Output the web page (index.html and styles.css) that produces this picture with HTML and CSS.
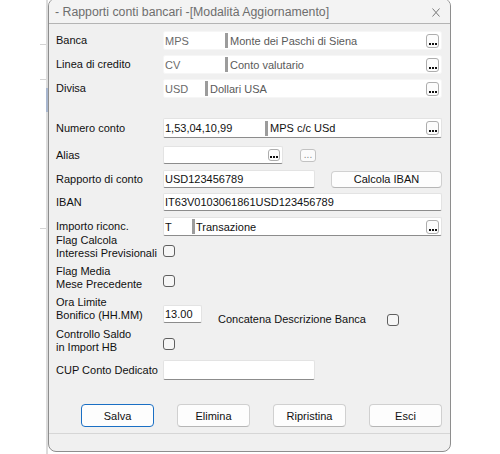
FILE: index.html
```html
<!DOCTYPE html>
<html>
<head>
<meta charset="utf-8">
<link rel="stylesheet" href="styles.css">
</head>
<body>
<div class="edge">
  <div class="edge-ticks">
    <span class="tick t1"></span><span class="tick t2"></span><span class="tick t3"></span>
  </div>
  <div class="edge-line"><span class="edge-blue"></span></div>
</div>
<div class="win">
  <div class="titlebar">
    <span class="title">- Rapporti conti bancari -[Modalità Aggiornamento]</span>
    <svg class="close" width="8" height="9" viewBox="0 0 8 9"><path d="M0.5 0.5L7.5 8.5M7.5 0.5L0.5 8.5" stroke="#7a7a7a" stroke-width="1" fill="none"/></svg>
  </div>
  <div class="content">
    <div class="row r1">
      <div class="lbl">Banca</div>
      <div class="fld dis w-full"><span class="code cw61">MPS</span><span class="bar"></span><span class="desc">Monte dei Paschi di Siena</span><span class="ell"><svg width="8" height="2" viewBox="0 0 8 2"><rect x="0" y="0" width="2" height="2"/><rect x="3" y="0" width="2" height="2"/><rect x="6" y="0" width="2" height="2"/></svg></span></div>
    </div>
    <div class="row r2">
      <div class="lbl">Linea di credito</div>
      <div class="fld dis w-full"><span class="code cw61">CV</span><span class="bar"></span><span class="desc">Conto valutario</span><span class="ell"><svg width="8" height="2" viewBox="0 0 8 2"><rect x="0" y="0" width="2" height="2"/><rect x="3" y="0" width="2" height="2"/><rect x="6" y="0" width="2" height="2"/></svg></span></div>
    </div>
    <div class="row r3">
      <div class="lbl">Divisa</div>
      <div class="fld dis w-full"><span class="code cw41">USD</span><span class="bar"></span><span class="desc">Dollari USA</span><span class="ell"><svg width="8" height="2" viewBox="0 0 8 2"><rect x="0" y="0" width="2" height="2"/><rect x="3" y="0" width="2" height="2"/><rect x="6" y="0" width="2" height="2"/></svg></span></div>
    </div>
    <div class="row r4">
      <div class="lbl">Numero conto</div>
      <div class="fld w-full"><span class="code cw101">1,53,04,10,99</span><span class="bar"></span><span class="desc">MPS c/c USd</span><span class="ell"><svg width="8" height="2" viewBox="0 0 8 2"><rect x="0" y="0" width="2" height="2"/><rect x="3" y="0" width="2" height="2"/><rect x="6" y="0" width="2" height="2"/></svg></span></div>
    </div>
    <div class="row r5">
      <div class="lbl">Alias</div>
      <div class="fld w-alias"><span class="ell small"><svg width="8" height="2" viewBox="0 0 8 2"><rect x="0" y="0" width="2" height="2"/><rect x="3" y="0" width="2" height="2"/><rect x="6" y="0" width="2" height="2"/></svg></span></div>
      <span class="ell2">...</span>
    </div>
    <div class="row r6">
      <div class="lbl">Rapporto di conto</div>
      <div class="fld w-mid"><span class="code">USD123456789</span></div>
      <div class="btn calc">Calcola IBAN</div>
    </div>
    <div class="row r7">
      <div class="lbl">IBAN</div>
      <div class="fld w-full"><span class="code">IT63V0103061861USD123456789</span></div>
    </div>
    <div class="row r8">
      <div class="lbl">Importo riconc.</div>
      <div class="fld w-full"><span class="code cw28">T</span><span class="bar"></span><span class="desc d1">Transazione</span><span class="ell"><svg width="8" height="2" viewBox="0 0 8 2"><rect x="0" y="0" width="2" height="2"/><rect x="3" y="0" width="2" height="2"/><rect x="6" y="0" width="2" height="2"/></svg></span></div>
    </div>
    <div class="row r9 rchk">
      <div class="lbl lbl2">Flag Calcola<br>Interessi Previsionali</div>
      <span class="chk mb1"></span>
    </div>
    <div class="row r10 rchk">
      <div class="lbl lbl2">Flag Media<br>Mese Precedente</div>
      <span class="chk mb2"></span>
    </div>
    <div class="row r11 rchk">
      <div class="lbl lbl3">Ora Limite<br>Bonifico (HH.MM)</div>
      <div class="fld w-ora"><span class="code">13.00</span></div>
      <span class="concat">Concatena Descrizione Banca</span>
      <span class="chk"></span>
    </div>
    <div class="row r12 rchk">
      <div class="lbl lbl3">Controllo Saldo<br>in Import HB</div>
      <span class="chk mb4"></span>
    </div>
    <div class="row r13">
      <div class="lbl">CUP Conto Dedicato</div>
      <div class="fld w-mid"></div>
    </div>
    <div class="buttons">
      <div class="btn bt def">Salva</div>
      <div class="btn bt">Elimina</div>
      <div class="btn bt">Ripristina</div>
      <div class="btn bt">Esci</div>
    </div>
    <div class="sep"></div>
    <div class="status"></div>
  </div>
</div>
</body>
</html>
```
FILE: styles.css
```css
* { box-sizing: border-box; }
html, body { margin: 0; padding: 0; background: #fff; }
body {
  font-family: "Liberation Sans", Arial, sans-serif;
  font-size: 11px;
  color: #111;
  display: flex;
  width: 500px;
  height: 454px;
  overflow: hidden;
}
.edge { width: 48px; flex: none; display: flex; justify-content: flex-end; }
.edge-ticks { width: 6px; display: flex; flex-direction: column; }
.tick { display: block; height: 1px; background: #d4d4d4; }
.t1 { margin-top: 44px; }
.t2 { margin-top: 34px; }
.t3 { margin-top: 148px; }
.edge-line { width: 2px; height: 100%; background: #dcdcdc; display: flex; flex-direction: column; }
.edge-blue { display: block; margin-top: 88px; height: 24px; background: #a9b7cf; }

.win {
  flex: none;
  width: 403px;
  height: 454px;
  margin-top: -2px;
  border: 1px solid #8e8e8e;
  border-radius: 8px;
  background: #f0f0f0;
  display: flex;
  flex-direction: column;
  overflow: hidden;
}
.titlebar {
  height: 25px;
  flex: none;
  display: flex;
  align-items: center;
  padding: 2px 10px 0 6px;
  background: #f3f3f3;
  border-bottom: 1px solid #b4b4b4;
}
.title { font-size: 12.3px; color: #6e6e6e; white-space: nowrap; }
.close { margin-left: auto; }

.content { flex: 1; display: flex; flex-direction: column; }
.row { display: flex; align-items: center; padding-left: 7px; flex: none; }
.lbl { width: 107px; flex: none; line-height: 13px; white-space: nowrap; }
.rchk { align-items: flex-end; }
.lbl2 { line-height: 12.5px; align-self: flex-start; }
.lbl3 { line-height: 13px; align-self: flex-start; }

.r1 { margin-top: 7px; height: 19px; }
.r2 { margin-top: 5px; height: 19px; }
.r3 { margin-top: 5px; height: 19px; }
.r4 { margin-top: 20px; height: 20px; }
.r5 { margin-top: 8px; height: 18px; }
.r6 { margin-top: 6px; height: 18px; }
.r7 { margin-top: 5px; height: 18px; }
.r8 { margin-top: 6px; height: 19px; }
.r9 { margin-top: -2px; height: 24px; }
.r10 { margin-top: 7px; height: 24px; }
.r11 { margin-top: 7px; height: 30px; }
.r12 { margin-top: 2px; height: 26px; }
.r13 { margin-top: 6px; height: 20px; }

.fld {
  display: flex;
  align-items: center;
  height: 100%;
  background: #fff;
  border: 1px solid #e3e3e3;
  border-bottom-color: #8c8c8c;
  border-radius: 2px;
  flex: none;
  white-space: nowrap;
}
.fld.dis { border-color: #f6f6f6; color: #6a6a6a; }
.w-full { width: 279px; }
.w-alias { width: 120px; }
.w-mid { width: 152px; }
.w-ora { width: 39px; height: 18px; align-self: flex-end; margin-bottom: 3px; }

.code { padding-left: 1px; flex: none; }
.cw61 { width: 61px; }
.cw41 { width: 41px; }
.cw101 { width: 101px; }
.cw28 { width: 28px; }
.bar { width: 3px; height: 15px; background: #9c9c9c; flex: none; }
.desc { padding-left: 2px; flex: 1; }
.d1 { padding-left: 1px; }
.dis .desc { color: #5a5a5a; }

.ell {
  margin-left: auto;
  margin-right: 2px;
  width: 13px;
  height: 14px;
  flex: none;
  border: 1px solid #adadad;
  border-radius: 3px;
  background: #fcfcfc;
  display: flex;
  align-items: flex-end;
  justify-content: center;
  padding-bottom: 2px;
}
.ell svg { fill: #111; display: block; }
.ell.small { width: 12px; height: 12px; }
.ell2 {
  margin-left: 17px;
  width: 16px;
  height: 13px;
  flex: none;
  border: 1px solid #c2c2c2;
  border-radius: 3px;
  background: #fbfbfb;
  color: #8a8a8a;
  font-size: 10px;
  line-height: 9px;
  text-align: center;
  letter-spacing: 0;
}

.btn {
  display: flex;
  align-items: center;
  justify-content: center;
  flex: none;
  background: #fdfdfd;
  border: 1px solid #d0d0d0;
  border-bottom-color: #b6b6b6;
  border-radius: 4px;
  white-space: nowrap;
}
.calc { margin-left: 16px; width: 111px; height: 17px; }

.chk {
  width: 12px;
  height: 12px;
  flex: none;
  border: 1px solid #5f5f5f;
  border-radius: 3px;
  background: #f6f6f6;
}
.mb1 { margin-bottom: 1px; }
.mb2 { margin-bottom: 2px; }
.mb4 { margin-bottom: 4px; }
.concat { margin-left: 16px; width: 169px; line-height: 13px; flex: none; white-space: nowrap; }

.buttons { display: flex; gap: 23px; padding-left: 32px; margin-top: 24px; height: 23px; flex: none; }
.bt { width: 73px; height: 23px; }
.def { border-color: #1a6fc4; }
.sep { margin-top: 6px; height: 1px; background: #d6d6d6; flex: none; }
.status { flex: 1; }
```
